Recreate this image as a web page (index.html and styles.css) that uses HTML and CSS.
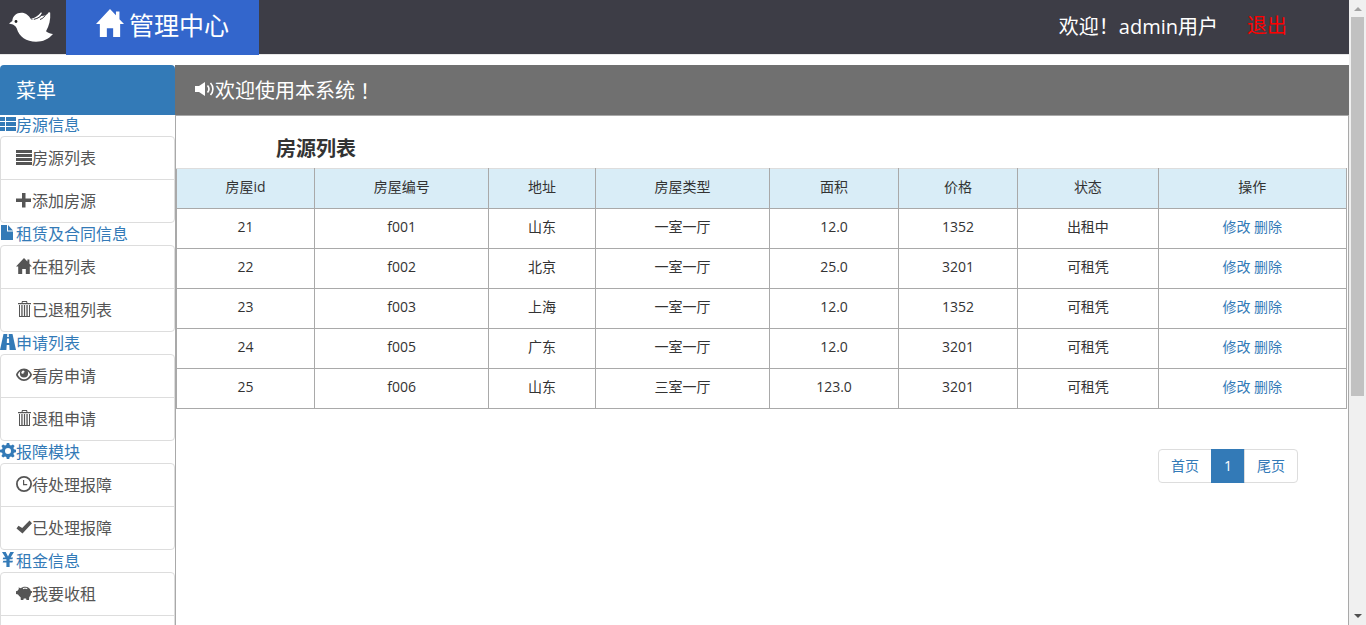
FILE: index.html
```html
<!DOCTYPE html>
<html lang="zh-CN">
<head>
	<meta charset="utf-8">
	<title>管理中心</title>
	<meta name="viewport" content="width=device-width, initial-scale=1">
	<link rel="stylesheet" href="styles.css">
</head>
<body>

<!-- icons -->
<svg class="sprite" aria-hidden="true">
	<symbol id="home" viewBox="0 0 16 16"><path d="M8 0L0 8.600h2.200V16h4v-5h3.600v5h4V8.600H16L13.400 5.800V1.400h-2v2.200z"/></symbol>
	<symbol id="th-list" viewBox="0 0 16 16"><path d="M0 1h5v4H0zM6 1h10v4H6zM0 6h5v4H0zM6 6h10v4H6zM0 11h5v4H0zM6 11h10v4H6z"/></symbol>
	<symbol id="lines" viewBox="0 0 16 16"><path d="M0 1h16v3H0zM0 5h16v3H0zM0 9h16v3H0zM0 13h16v3H0z"/></symbol>
	<symbol id="plus" viewBox="0 0 16 16"><path d="M6 1h3.500v5.500H15V10H9.500v5.500H6V10H0V6.500h6z"/></symbol>
	<symbol id="file" viewBox="0 0 16 16"><path d="M1 0h6v6.500h6V15H1zM8 0l5 5.500H8z"/></symbol>
	<symbol id="trash" viewBox="0 0 16 16"><path fill-rule="evenodd" d="M6 0h5l.5 2H15v1.300H2V2h3.500zM6.800 1l-.3 1h4l-.3-1zM3 4h11v12H3zM4 4v11h1.300V4zM6.600 4v11h1.300V4zM9.100 4v11h1.300V4zM11.700 4v11H13V4z"/></symbol>
	<symbol id="road" viewBox="0 0 16 16"><path fill-rule="evenodd" d="M3.500 0h3.800l-.2 3h1.800l-.2-3h3.800L16 16H9.600l-.3-5H6.700l-.3 5H0zM7 4.500L6.800 9h2.400L9 4.500z"/></symbol>
	<symbol id="eye" viewBox="0 0 16 16"><path fill-rule="evenodd" d="M8 1.500c4 0 7 3.200 8 6.200-1 3-4 6.200-8 6.200S1 10.700 0 7.700c1-3 4-6.200 8-6.200zM4.400 4.200C3.200 5.100 2.300 6.400 1.800 7.700 3 10.400 5.500 12.300 8 12.300s5-1.900 6.200-4.600c-.5-1.300-1.400-2.600-2.600-3.500.3.700.5 1.500.5 2.300a4.100 4.100 0 1 1-8.200 0c0-.8.200-1.600.5-2.300zM7.500 3.600C6 3.900 5.300 5 5.300 6.300l2 .7c0-1.200.5-1.800 1.600-2z"/></symbol>
	<symbol id="cog" viewBox="0 0 16 16"><path fill-rule="evenodd" d="M6.800 0h2.400l.5 2.100 1.300.5 1.900-1.200 1.700 1.700L13.400 5l.5 1.300 2.100.5v2.400l-2.100.5-.5 1.300 1.200 1.900-1.700 1.700-1.900-1.200-1.300.5-.5 2.100H6.800l-.5-2.100-1.300-.5-1.900 1.200-1.700-1.700L2.600 11l-.5-1.300L0 9.200V6.800l2.100-.5L2.600 5 1.400 3.100l1.700-1.700L5 2.600l1.300-.5zM8 5a3 3 0 1 0 0 6 3 3 0 0 0 0-6z"/></symbol>
	<symbol id="time" viewBox="0 0 16 16"><path fill-rule="evenodd" d="M8 0a8 8 0 1 1 0 16A8 8 0 0 1 8 0zm0 1.800a6.200 6.200 0 1 0 0 12.400A6.200 6.200 0 0 0 8 1.800zM7 4h1.200v4h3v1.200H7z"/></symbol>
	<symbol id="ok" viewBox="0 0 16 16"><path d="M13.500 1.500L16 4.300 6.500 14.500.5 9.500l2-2.800 3.700 2.200z"/></symbol>
	<symbol id="yen" viewBox="0 0 16 16"><path d="M2 0h3.700L8 4.500 10.300 0H14l-3.400 5.500H13l-.6 1.800H9.600v1.400H13l-.6 1.800H9.600V15H6.400v-4.500H2.700l.6-1.800h3.100V7.300H2.700l.6-1.800h2.100z"/></symbol>
	<symbol id="piggy" viewBox="0 0 16 16"><path fill-rule="evenodd" d="M2.500 2.500l2.500.8C6 2.300 7.400 1.800 9 1.800c3.300 0 5.300 1.700 5.900 4.400l1.100-.2v1.700l-1 .4c-.1 1.900-.8 3.200-1.800 4.100l-.2 2.800h-2.500l-.4-1.500H7.700L7.300 15H4.800l-.2-2.700C3.500 11.700 2.700 10.700 2 9.600L0 9V6.300l1.600-.6c.3-.7.800-1.300 1.300-1.800zM6.800 3.200l.3 1c1.300-.5 2.700-.5 4 0l.3-1c-1.400-.6-3.100-.6-4.600 0z"/></symbol>
	<symbol id="volume" viewBox="0 0 20 16"><path d="M0 5h4l6-4v14l-6-4H0z"/><path fill="none" stroke="currentColor" stroke-width="1.600" d="M12.500 4.500c1.700 2 1.700 5 0 7M15.500 2c3.200 3.400 3.200 8.600 0 12"/></symbol>
</svg>

<header class="topbar">
	<a class="logo" href="#" aria-label="首页">
		<svg viewBox="0 0 44 30">
			<path fill="#fff" d="M0 11.500L3.300 9C3.600 4 7.500.8 12.300.8c4.500 0 7 2.400 10 6.700 4-.2 7.500-1.400 9.500-3.500C36 4 38.500 2.500 39.500.5c.5-.5 1.500-.5 1.700.2.500 7-1 12.800-4.200 18.500 2.500 1.700 4.800 2.600 7 2.900-4.500 5.200-10 7.700-17 7.700-9.500 0-17-5-19.300-13.500C6.700 14 5 12.500 0 11.500z"/>
			<path fill="#fff" d="M22 6.800c4-.8 7.300-3 9.800-6.300l1.200.3c-1.300 3.500-4 5.700-8 6.700z"/>
			<path fill="none" stroke="#3d3d46" d="M25 7.300c4-.8 7.500-2.800 9.300-6.800M31 7.500c3-1 5-3 6.500-6.500"/>
			<circle cx="7" cy="9.500" r="1.400" fill="#222"/>
		</svg>
	</a>
	<a class="brand" href="#"><svg class="icon"><use href="#home"/></svg>管理中心</a>
	<div class="user">
		<span>欢迎<span class="mark">！</span>admin用户</span>
		<a href="#">退出</a>
	</div>
</header>

<div class="container">
	<nav class="sidebar">
		<h2 class="menu-title">菜单</h2>

		<a class="group-title" href="#"><svg class="icon"><use href="#th-list"/></svg>房源信息</a>
		<ul class="list-group">
			<li><a href="#"><svg class="icon"><use href="#lines"/></svg>房源列表</a></li>
			<li><a href="#"><svg class="icon"><use href="#plus"/></svg>添加房源</a></li>
		</ul>

		<a class="group-title" href="#"><svg class="icon"><use href="#file"/></svg>租赁及合同信息</a>
		<ul class="list-group">
			<li><a href="#"><svg class="icon"><use href="#home"/></svg>在租列表</a></li>
			<li><a href="#"><svg class="icon"><use href="#trash"/></svg>已退租列表</a></li>
		</ul>

		<a class="group-title" href="#"><svg class="icon"><use href="#road"/></svg>申请列表</a>
		<ul class="list-group">
			<li><a href="#"><svg class="icon"><use href="#eye"/></svg>看房申请</a></li>
			<li><a href="#"><svg class="icon"><use href="#trash"/></svg>退租申请</a></li>
		</ul>

		<a class="group-title" href="#"><svg class="icon"><use href="#cog"/></svg>报障模块</a>
		<ul class="list-group">
			<li><a href="#"><svg class="icon"><use href="#time"/></svg>待处理报障</a></li>
			<li><a href="#"><svg class="icon"><use href="#ok"/></svg>已处理报障</a></li>
		</ul>

		<a class="group-title" href="#"><svg class="icon"><use href="#yen"/></svg>租金信息</a>
		<ul class="list-group">
			<li><a href="#"><svg class="icon"><use href="#piggy"/></svg>我要收租</a></li>
			<li></li>
		</ul>
	</nav>

	<main class="content">
		<div class="welcome"><svg class="icon"><use href="#volume"/></svg>欢迎使用本系统<span class="mark">！</span></div>
		<div class="panel">
			<h1>房源列表</h1>
			<table>
				<colgroup>
					<col class="c-id"><col class="c-wide"><col class="c-addr"><col class="c-wide">
					<col class="c-area"><col class="c-price"><col class="c-state"><col class="c-action">
				</colgroup>
				<thead>
					<tr><th>房屋id</th><th>房屋编号</th><th>地址</th><th>房屋类型</th><th>面积</th><th>价格</th><th>状态</th><th>操作</th></tr>
				</thead>
				<tbody>
					<tr><td>21</td><td>f001</td><td>山东</td><td>一室一厅</td><td>12.0</td><td>1352</td><td>出租中</td><td><a href="#">修改</a> <a href="#">删除</a></td></tr>
					<tr><td>22</td><td>f002</td><td>北京</td><td>一室一厅</td><td>25.0</td><td>3201</td><td>可租凭</td><td><a href="#">修改</a> <a href="#">删除</a></td></tr>
					<tr><td>23</td><td>f003</td><td>上海</td><td>一室一厅</td><td>12.0</td><td>1352</td><td>可租凭</td><td><a href="#">修改</a> <a href="#">删除</a></td></tr>
					<tr><td>24</td><td>f005</td><td>广东</td><td>一室一厅</td><td>12.0</td><td>3201</td><td>可租凭</td><td><a href="#">修改</a> <a href="#">删除</a></td></tr>
					<tr><td>25</td><td>f006</td><td>山东</td><td>三室一厅</td><td>123.0</td><td>3201</td><td>可租凭</td><td><a href="#">修改</a> <a href="#">删除</a></td></tr>
				</tbody>
			</table>
			<ul class="pagination">
				<li><a href="#">首页</a></li>
				<li class="active"><a href="#">1</a></li>
				<li><a href="#">尾页</a></li>
			</ul>
		</div>
	</main>
</div>

<div class="scrollbar" aria-hidden="true">
	<span class="arrow up"></span>
	<span class="thumb"></span>
	<span class="arrow down"></span>
</div>

</body>
</html>
```
FILE: styles.css
```css
* {
	box-sizing: border-box;
}
html {
	scrollbar-width: none;
}
body {
	margin: 0;
	padding-right: 17px;
	background-color: #fff;
	color: #333;
	font-family: "Open Sans", "Noto Sans CJK SC", sans-serif;
	font-size: 14px;
	line-height: 20px;
}
a {
	color: #337ab7;
	text-decoration: none;
}
ul {
	list-style: none;
	margin: 0;
	padding: 0;
}
.sprite {
	display: none;
}
.icon {
	width: 16px;
	height: 16px;
	flex: none;
	margin-bottom: 2px;
	fill: currentColor;
}
/* exclamation mark in the middle of its square */
.mark {
	font-family: "Noto Sans CJK TC", sans-serif;
}

/* top bar */
.topbar {
	display: flex;
	align-items: flex-start;
	height: 55px;
	margin-bottom: 10px;
	background-color: #3d3d46;
	border-bottom: 1px solid #e7e7e7;
	color: #fff;
}
.logo {
	width: 66px;
	padding: 12px 0 0 9px;
}
.logo svg {
	display: block;
	width: 44px;
	height: 30px;
}
.brand {
	display: flex;
	align-items: center;
	gap: 5px;
	height: 55px;
	padding: 0 30px 6px;
	background-color: #3366cc;
	color: #fff;
	font-size: 25px;
}
.brand .icon {
	width: 28px;
	height: 28px;
	margin-bottom: 4px;
}
.user {
	display: flex;
	gap: 29px;
	margin-left: auto;
	padding: 11px 62px 0 0;
	font-size: 20px;
	line-height: 30px;
}
.user a {
	color: #f00;
}

.container {
	display: flex;
}

/* left menu */
.sidebar {
	width: 175px;
	flex: none;
	font-size: 16px;
}
.menu-title {
	height: 50px;
	margin: 0 0 -1px;
	padding: 0 16px;
	background-color: #337ab7;
	border-radius: 4px 4px 0 0;
	color: #fff;
	font-size: 20px;
	font-weight: normal;
	line-height: 52px;
}
.group-title {
	display: flex;
	align-items: center;
	height: 22px;
}
.list-group {
	border: 1px solid #ddd;
	border-radius: 4px;
}
.list-group li {
	height: 42px;
}
.list-group li + li {
	height: 43px;
	border-top: 1px solid #ddd;
}
.list-group a {
	display: flex;
	align-items: center;
	height: 42px;
	padding: 0 15px;
	color: #555;
}

/* right side */
.content {
	display: flex;
	flex-direction: column;
	flex: 1;
}
.welcome {
	display: flex;
	align-items: center;
	height: 50px;
	padding: 2px 0 0 20px;
	background-color: #707070;
	color: #fff;
	font-size: 20px;
}
.welcome .icon {
	width: 20px;
	margin-bottom: 4px;
}
.panel {
	flex: 1;
	border: 1px solid #a9a9a9;
}
.panel h1 {
	margin: 0 0 0 100px;
	padding-top: 17px;
	height: 52px;
	font-size: 20px;
	line-height: 32px;
}
table {
	width: calc(100% - 1px);
	table-layout: fixed;
	border-collapse: collapse;
	text-align: center;
}
.c-id { width: 11.8%; }
.c-wide { width: 14.9%; }
.c-addr { width: 9.1%; }
.c-area { width: 11%; }
.c-price { width: 10.2%; }
.c-state { width: 12%; }
.c-action { width: 16.1%; }
th, td {
	height: 40px;
	padding: 0 8px 4px;
	border: 1px solid #a9a9a9;
	font-weight: normal;
}
th {
	background-color: #d9edf7;
	border-top-color: #ddd;
}

.pagination {
	display: flex;
	justify-content: flex-end;
	margin: 40px 50px 0 0;
}
.pagination a {
	display: block;
	margin-left: -1px;
	padding: 6px 12px;
	border: 1px solid #ddd;
}
.pagination li:first-child a {
	border-radius: 4px 0 0 4px;
}
.pagination li:last-child a {
	border-radius: 0 4px 4px 0;
}
.pagination .active a {
	background-color: #337ab7;
	border-color: #337ab7;
	color: #fff;
}

/* scroll bar */
.scrollbar {
	position: fixed;
	top: 0;
	right: 0;
	bottom: 0;
	display: flex;
	flex-direction: column;
	align-items: center;
	width: 17px;
	padding: 7px 0;
	background-color: #f0f0f0;
}
.thumb {
	width: 13px;
	height: 62%;
	margin: 6px 0 auto;
	background-color: #c1c1c1;
	flex: none;
}
.arrow {
	border: 4px solid transparent;
}
.up {
	border-top: 0;
	border-bottom-color: #a3a3a3;
}
.down {
	border-bottom: 0;
	border-top-color: #505050;
}
```
